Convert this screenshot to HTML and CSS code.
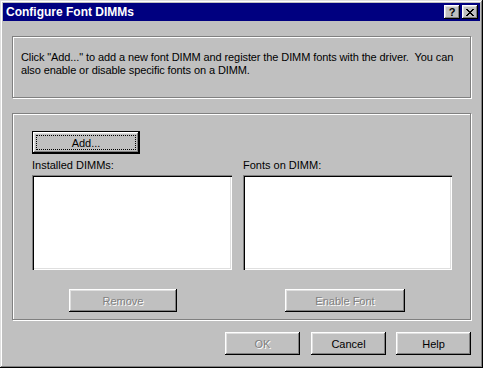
FILE: index.html
```html
<!DOCTYPE html>
<html lang="en">
<head>
    <meta charset="UTF-8">
    <title>Configure Font DIMMs</title>
    <link rel="stylesheet" href="styles.css">
</head>
<body>
    <div class="window">
        <div class="titlebar">
            <span class="title">Configure Font DIMMs</span>
            <div class="caption-buttons">
                <button class="cap-btn help-glyph">?</button>
                <button class="cap-btn">
                    <svg width="8" height="7" viewBox="0 0 8 7" shape-rendering="crispEdges">
                        <path d="M0 0h2v1h-2z M6 0h2v1h-2z M1 1h2v1h-2z M5 1h2v1h-2z M2 2h4v1h-4z M3 3h2v1h-2z M2 4h4v1h-4z M1 5h2v1h-2z M5 5h2v1h-2z M0 6h2v1h-2z M6 6h2v1h-2z" fill="#000"/>
                    </svg>
                </button>
            </div>
        </div>

        <div class="content">
            <div class="group intro">
                <p>Click "Add..." to add a new font DIMM and register the DIMM fonts with the driver.&nbsp; You can<br>also enable or disable specific fonts on a DIMM.</p>
            </div>

            <div class="group dimms">
                <button class="btn default add-btn">Add...</button>
                <div class="columns">
                    <div class="col">
                        <label class="field-label">Installed DIMMs:</label>
                        <div class="listbox"></div>
                        <button class="btn disabled remove-btn">Remove</button>
                    </div>
                    <div class="col">
                        <label class="field-label">Fonts on DIMM:</label>
                        <div class="listbox"></div>
                        <button class="btn disabled enable-btn">Enable Font</button>
                    </div>
                </div>
            </div>

            <div class="actions">
                <button class="btn disabled action-btn">OK</button>
                <button class="btn action-btn cancel-btn">Cancel</button>
                <button class="btn action-btn help-btn">Help</button>
            </div>
        </div>
    </div>
</body>
</html>
```

FILE: styles.css
```css
body {
    margin: 0;
    font-family: "Liberation Sans", Arial, sans-serif;
    font-size: 11px;
    color: #000;
    background-color: #c0c0c0;
}
.window {
    width: 483px;
    height: 368px;
    box-sizing: border-box;
    padding: 3px;
    background-color: #c0c0c0;
    box-shadow: inset -1px -1px #000, inset 1px 1px #dfdfdf, inset -2px -2px #808080, inset 2px 2px #fff;
}
.titlebar {
    height: 18px;
    display: flex;
    align-items: center;
    padding: 0 2px 0 3px;
    background-color: #000080;
    color: #fff;
}
.title {
    flex: 1;
    font-weight: bold;
    font-size: 12px;
}
.caption-buttons {
    display: flex;
    gap: 2px;
}
.cap-btn {
    width: 16px;
    height: 14px;
    padding: 0;
    border: none;
    display: flex;
    align-items: center;
    justify-content: center;
    background-color: #c0c0c0;
    box-shadow: inset -1px -1px #000, inset 1px 1px #fff, inset -2px -2px #808080, inset 2px 2px #dfdfdf;
}
.help-glyph {
    font-family: "Liberation Sans", Arial, sans-serif;
    font-weight: bold;
    font-size: 11px;
    color: #000;
    line-height: 14px;
}
.content {
    padding: 15px 0 0 9px;
}
.group {
    width: 459px;
    box-sizing: border-box;
    border: 1px solid #808080;
    box-shadow: 1px 1px #fff, inset 1px 1px #fff;
}
.intro {
    height: 62px;
    padding: 14px 8px 0 8px;
}
.intro p {
    margin: 0;
    line-height: 13px;
    white-space: nowrap;
    letter-spacing: -0.1px;
}
.dimms {
    height: 207px;
    margin-top: 15px;
    padding: 17px 0 0 19px;
}
.btn {
    height: 23px;
    padding: 0;
    border: none;
    background-color: #c0c0c0;
    font-family: "Liberation Sans", Arial, sans-serif;
    font-size: 11px;
    color: #000;
    box-shadow: inset -1px -1px #000, inset 1px 1px #fff, inset -2px -2px #808080, inset 2px 2px #dfdfdf;
}
.btn.default {
    box-shadow: inset 0 0 0 1px #000, inset -2px -2px #000, inset 2px 2px #fff, inset -3px -3px #808080, inset 3px 3px #dfdfdf;
    outline: 1px dotted #000;
    outline-offset: -5px;
}
.btn.disabled {
    color: #808080;
    text-shadow: 1px 1px #fff;
}
.add-btn {
    display: block;
    width: 108px;
}
.columns {
    display: grid;
    grid-template-columns: 200px 209px;
    column-gap: 11px;
}
.field-label {
    display: block;
    margin-top: 5px;
    line-height: 13px;
}
.listbox {
    height: 95px;
    margin-top: 3px;
    background-color: #fff;
    box-shadow: inset 1px 1px #808080, inset 2px 2px #000, inset -1px -1px #fff, inset -2px -2px #dfdfdf;
}
.remove-btn {
    width: 108px;
    margin: 19px 0 0 37px;
}
.enable-btn {
    width: 120px;
    margin: 19px 0 0 42px;
}
.actions {
    width: 459px;
    display: flex;
    justify-content: flex-end;
    margin-top: 12px;
}
.action-btn {
    width: 75px;
}
.cancel-btn {
    margin-left: 11px;
}
.help-btn {
    margin-left: 10px;
}
```
